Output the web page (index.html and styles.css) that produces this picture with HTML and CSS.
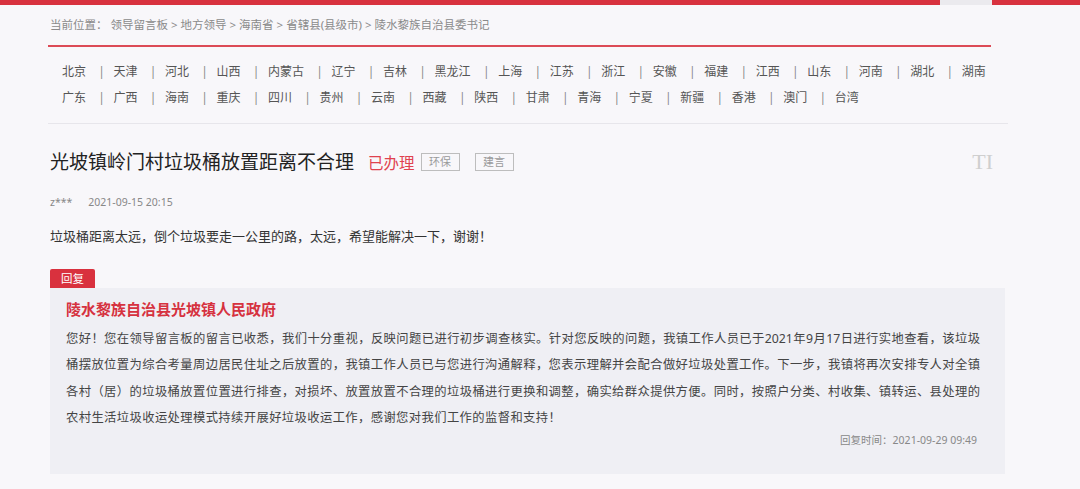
FILE: index.html
```
<!DOCTYPE html>
<html lang="zh-CN">
<head>
<meta charset="utf-8">
<title>光坡镇岭门村垃圾桶放置距离不合理</title>
<link rel="stylesheet" href="styles.css">
</head>
<body>
<div class="topbar"><span class="seg-red"></span><span class="seg-gray"></span><span class="seg-red grow"></span></div>
<div class="wrap">
  <div class="crumb">当前位置：&nbsp;领导留言板 &gt; 地方领导 &gt; 海南省 &gt; 省辖县(县级市) &gt; 陵水黎族自治县委书记</div>
  <div class="provinces">
    <div class="prow">
      <a>北京</a><i>|</i><a>天津</a><i>|</i><a>河北</a><i>|</i><a>山西</a><i>|</i><a>内蒙古</a><i>|</i><a>辽宁</a><i>|</i><a>吉林</a><i>|</i><a>黑龙江</a><i>|</i><a>上海</a><i>|</i><a>江苏</a><i>|</i><a>浙江</a><i>|</i><a>安徽</a><i>|</i><a>福建</a><i>|</i><a>江西</a><i>|</i><a>山东</a><i>|</i><a>河南</a><i>|</i><a>湖北</a><i>|</i><a>湖南</a>
    </div>
    <div class="prow">
      <a>广东</a><i>|</i><a>广西</a><i>|</i><a>海南</a><i>|</i><a>重庆</a><i>|</i><a>四川</a><i>|</i><a>贵州</a><i>|</i><a>云南</a><i>|</i><a>西藏</a><i>|</i><a>陕西</a><i>|</i><a>甘肃</a><i>|</i><a>青海</a><i>|</i><a>宁夏</a><i>|</i><a>新疆</a><i>|</i><a>香港</a><i>|</i><a>澳门</a><i>|</i><a>台湾</a>
    </div>
  </div>
  <div class="title-row">
    <h1 class="title">光坡镇岭门村垃圾桶放置距离不合理</h1>
    <span class="status">已办理</span>
    <span class="tag">环保</span>
    <span class="tag tag2">建言</span>
    <span class="font-ico">TI</span>
  </div>
  <div class="meta"><span class="user">z***</span><span class="date">2021-09-15 20:15</span></div>
  <p class="content">垃圾桶距离太远，倒个垃圾要走一公里的路，太远，希望能解决一下，谢谢！</p>
  <div class="badge">回复</div>
  <div class="reply">
    <div class="org">陵水黎族自治县光坡镇人民政府</div>
    <p class="reply-text"><span class="line">您好！您在领导留言板的留言已收悉，我们十分重视，反映问题已进行初步调查核实。针对您反映的问题，我镇工作人员已于2021年9月17日进行实地查看，该垃圾</span><span class="line">桶摆放位置为综合考量周边居民住址之后放置的，我镇工作人员已与您进行沟通解释，您表示理解并会配合做好垃圾处置工作。下一步，我镇将再次安排专人对全镇</span><span class="line">各村（居）的垃圾桶放置位置进行排查，对损坏、放置放置不合理的垃圾桶进行更换和调整，确实给群众提供方便。同时，按照户分类、村收集、镇转运、县处理的</span><span class="line last">农村生活垃圾收运处理模式持续开展好垃圾收运工作，感谢您对我们工作的监督和支持！</span></p>
    <div class="reply-time">回复时间：2021-09-29 09:49</div>
  </div>
</div>
</body>
</html>
```
FILE: styles.css
```
* { box-sizing: border-box; }
body {
  margin: 0;
  background: #f8f7fa;
  font-family: "Noto Sans", "Noto Sans CJK SC", sans-serif;
  color: #333;
}
.topbar { display: flex; height: 5px; }
.seg-red { width: 940px; background: #d8323f; }
.seg-gray { width: 52px; background: #ebeaee; }
.grow { flex: 1; width: auto; }
.wrap { margin-left: 48px; width: 960px; }
.crumb {
  width: 943px;
  padding: 11px 2px 0;
  height: 42px;
  line-height: 18px;
  font-size: 11.5px;
  color: #8a8a8a;
  border-bottom: 2px solid #dc4b56;
}
.provinces {
  padding: 12px 14px;
  border-bottom: 1px solid #e7e6eb;
}
.prow { display: flex; line-height: 26px; font-size: 12px; color: #555; }
.prow a { white-space: nowrap; }
.prow i { font-style: normal; color: #8a8a8a; margin: 0 12.25px; width: 3px; text-align: center; }
.title-row {
  display: flex;
  align-items: center;
  margin-top: 23px;
  height: 30px;
  padding-left: 2px;
}
.title { margin: 0; font-size: 19px; font-weight: normal; color: #222; line-height: 28px; }
.status { margin-left: 14px; font-size: 15.5px; color: #e0424f; }
.tag {
  margin-left: 6px;
  width: 39px;
  height: 18px;
  line-height: 16px;
  border: 1px solid #bdbdbd;
  font-size: 11px;
  color: #9a9a9a;
  text-align: center;
}
.tag2 { margin-left: 15px; }
.font-ico {
  margin-left: auto;
  margin-right: 15px;
  font-family: "Liberation Serif", serif;
  font-size: 22px;
  color: #cfcfcf;
}
.meta { margin-top: 17px; line-height: 16px; font-size: 10.5px; color: #888; padding-left: 2px; }
.date { margin-left: 16px; }
.content { margin: 16px 0 0; padding-left: 2px; font-size: 13px; line-height: 20px; color: #333; }
.badge {
  margin-top: 23px;
  margin-left: 2px;
  width: 45px;
  height: 19px;
  line-height: 19px;
  padding-left: 11px;
  font-size: 11.5px;
  color: #fff;
  background: #d9313e;
  border-radius: 2px 2px 0 0;
}
.reply {
  margin-left: 2px;
  width: 955px;
  background: #efeff4;
  padding: 10px 28px 26px 16px;
}
.org { font-size: 15px; font-weight: bold; color: #d6323f; line-height: 22px; }
.reply-text { margin: 6px 0 0; width: 914px; font-size: 12.3px; line-height: 26.3px; color: #444; }
.line { display: block; white-space: nowrap; text-align: justify; text-align-last: justify; }
.line.last { text-align-last: auto; letter-spacing: 0.4px; }
.reply-time { text-align: right; font-size: 10.5px; line-height: 16px; color: #888; margin-top: 1px; }
```
